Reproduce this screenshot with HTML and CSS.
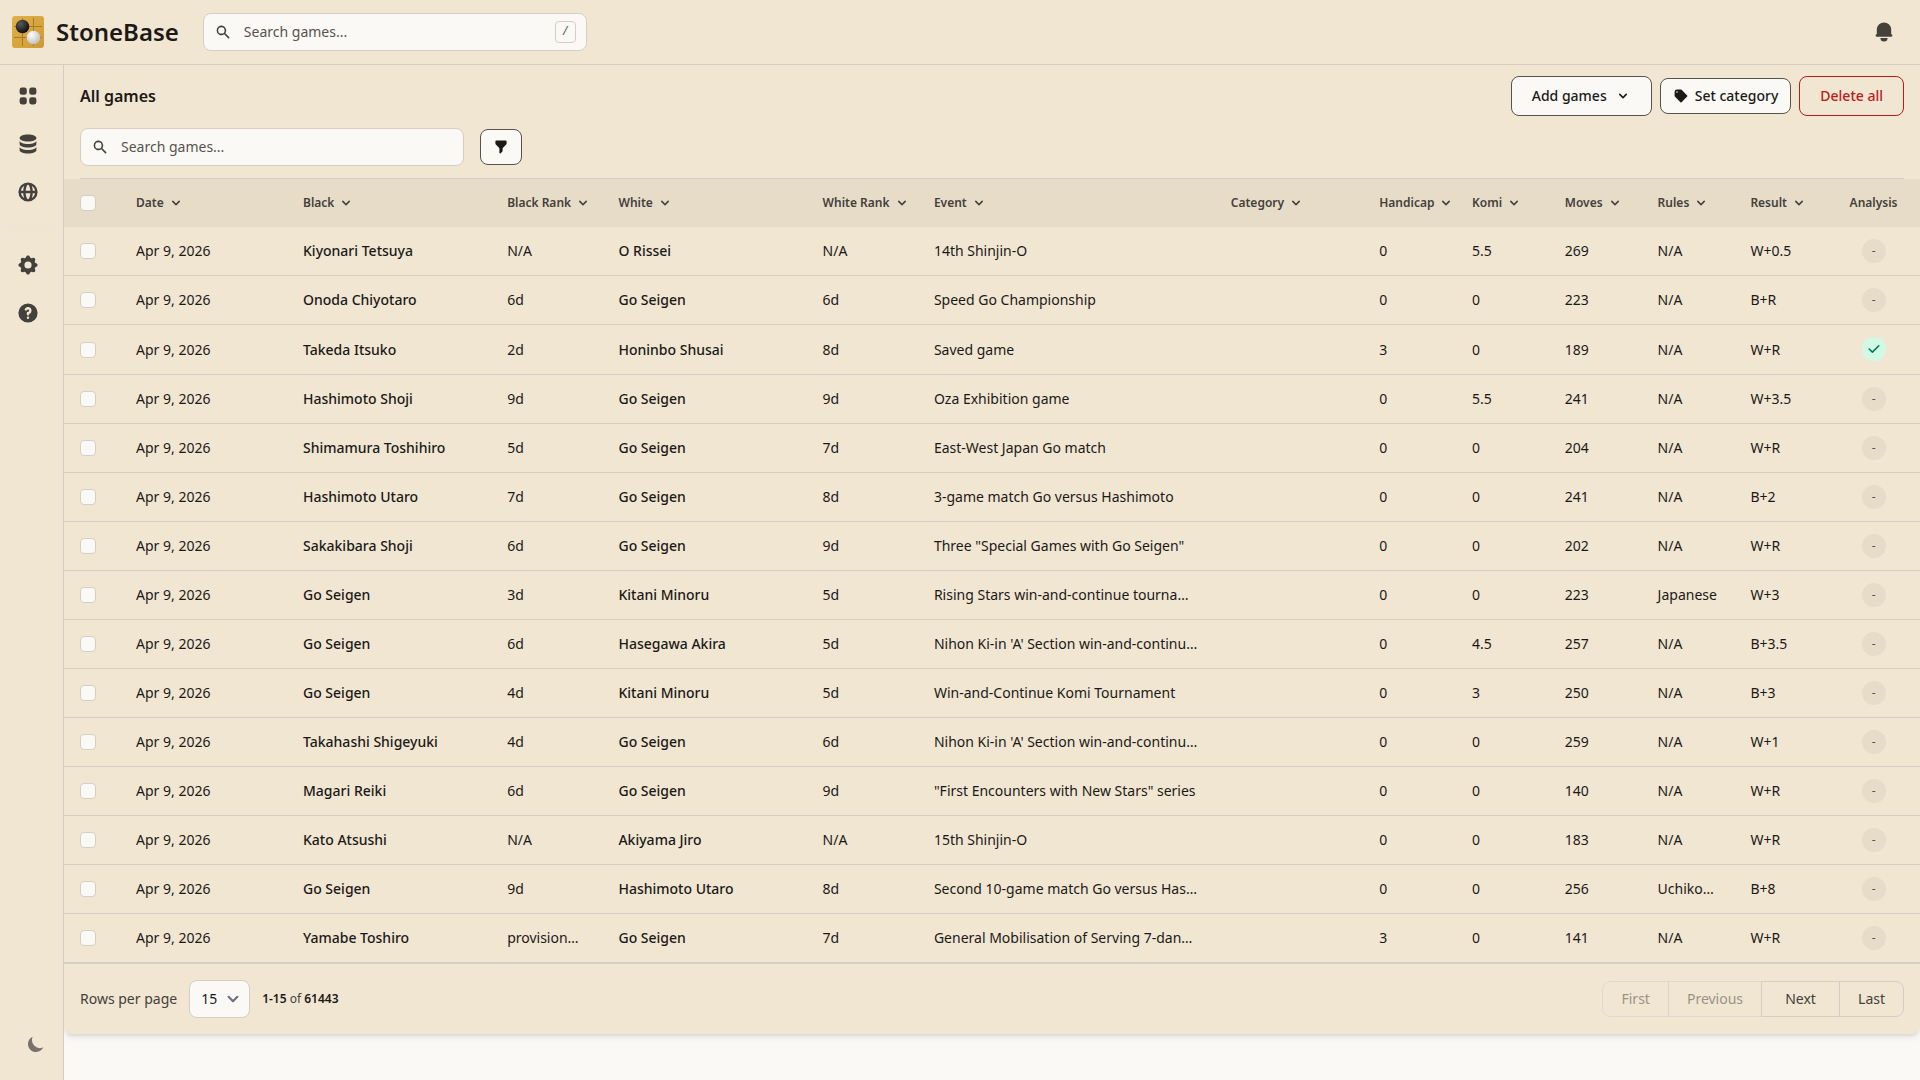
FILE: index.html
```html
<!DOCTYPE html>
<html lang="en">
<head>
    <meta charset="UTF-8">
    <meta name="viewport" content="width=device-width, initial-scale=1.0">
    <title>StoneBase</title>
    <link rel="stylesheet" href="styles.css">
</head>
<body>
<svg class="sprite" aria-hidden="true">
    <symbol id="i-search" viewBox="0 0 20 20"><path fill-rule="evenodd" d="M8 4a4 4 0 100 8 4 4 0 000-8zM2 8a6 6 0 1110.89 3.476l4.817 4.817a1 1 0 01-1.414 1.414l-4.816-4.816A6 6 0 012 8z"/></symbol>
    <symbol id="i-bell" viewBox="0 0 20 20"><path d="M10 2a6 6 0 00-6 6v3.586l-.707.707A1 1 0 004 14h12a1 1 0 00.707-1.707L16 11.586V8a6 6 0 00-6-6zM10 18a3 3 0 01-3-3h6a3 3 0 01-3 3z"/></symbol>
    <symbol id="i-grid" viewBox="0 0 20 20"><path d="M5 3a2 2 0 00-2 2v2a2 2 0 002 2h2a2 2 0 002-2V5a2 2 0 00-2-2H5zM5 11a2 2 0 00-2 2v2a2 2 0 002 2h2a2 2 0 002-2v-2a2 2 0 00-2-2H5zM11 5a2 2 0 012-2h2a2 2 0 012 2v2a2 2 0 01-2 2h-2a2 2 0 01-2-2V5zM11 13a2 2 0 012-2h2a2 2 0 012 2v2a2 2 0 01-2 2h-2a2 2 0 01-2-2v-2z"/></symbol>
    <symbol id="i-database" viewBox="0 0 20 20"><path d="M3 12v3c0 1.657 3.134 3 7 3s7-1.343 7-3v-3c0 1.657-3.134 3-7 3s-7-1.343-7-3z"/><path d="M3 7v3c0 1.657 3.134 3 7 3s7-1.343 7-3V7c0 1.657-3.134 3-7 3S3 8.657 3 7z"/><path d="M17 5c0 1.657-3.134 3-7 3S3 6.657 3 5s3.134-3 7-3 7 1.343 7 3z"/></symbol>
    <symbol id="i-globe" viewBox="0 0 20 20"><path fill-rule="evenodd" d="M4.083 9h1.946c.089-1.546.383-2.97.837-4.118A6.004 6.004 0 004.083 9zM10 2a8 8 0 100 16 8 8 0 000-16zm0 2c-.076 0-.232.032-.465.262-.238.234-.497.623-.737 1.182-.389.907-.673 2.142-.766 3.556h3.936c-.093-1.414-.377-2.649-.766-3.556-.24-.56-.5-.948-.737-1.182C10.232 4.032 10.076 4 10 4zm3.971 5c-.089-1.546-.383-2.97-.837-4.118A6.004 6.004 0 0115.917 9h-1.946zm-2.003 2H8.032c.093 1.414.377 2.649.766 3.556.24.56.5.948.737 1.182.233.23.389.262.465.262.076 0 .232-.032.465-.262.238-.234.498-.623.737-1.182.389-.907.673-2.142.766-3.556zm1.166 4.118c.454-1.147.748-2.572.837-4.118h1.946a6.004 6.004 0 01-2.783 4.118zm-6.268 0C6.412 13.97 6.118 12.546 6.03 11H4.083a6.004 6.004 0 002.783 4.118z"/></symbol>
    <symbol id="i-cog" viewBox="0 0 20 20"><path fill-rule="evenodd" d="M11.49 3.17c-.38-1.56-2.6-1.56-2.98 0a1.532 1.532 0 01-2.286.948c-1.372-.836-2.942.734-2.106 2.106.54.886.061 2.042-.947 2.287-1.561.379-1.561 2.6 0 2.978a1.532 1.532 0 01.947 2.287c-.836 1.372.734 2.942 2.106 2.106a1.532 1.532 0 012.287.947c.379 1.561 2.6 1.561 2.978 0a1.533 1.533 0 012.287-.947c1.372.836 2.942-.734 2.106-2.106a1.533 1.533 0 01.947-2.287c1.561-.379 1.561-2.6 0-2.978a1.532 1.532 0 01-.947-2.287c.836-1.372-.734-2.942-2.106-2.106a1.532 1.532 0 01-2.287-.947zM10 13a3 3 0 100-6 3 3 0 000 6z"/></symbol>
    <symbol id="i-help" viewBox="0 0 20 20"><path fill-rule="evenodd" d="M18 10a8 8 0 11-16 0 8 8 0 0116 0zm-8-3a1 1 0 00-.867.5 1 1 0 11-1.731-1A3 3 0 0113 8a3.001 3.001 0 01-2 2.83V11a1 1 0 11-2 0v-1a1 1 0 011-1 1 1 0 100-2zm0 8a1 1 0 100-2 1 1 0 000 2z"/></symbol>
    <symbol id="i-moon" viewBox="0 0 20 20"><path d="M17.293 13.293A8 8 0 016.707 2.707a8.001 8.001 0 1010.586 10.586z"/></symbol>
    <symbol id="i-tag" viewBox="0 0 20 20"><path fill-rule="evenodd" d="M17.707 9.293a1 1 0 010 1.414l-7 7a1 1 0 01-1.414 0l-7-7A.997.997 0 012 10V5a3 3 0 013-3h5c.256 0 .512.098.707.293l7 7zM5 6a1 1 0 100-2 1 1 0 000 2z"/></symbol>
    <symbol id="i-filter" viewBox="0 0 20 20"><path d="M3 3a1 1 0 011-1h12a1 1 0 011 1v3a1 1 0 01-.293.707L12 11.414V15a1 1 0 01-.293.707l-2 2A1 1 0 018 17v-5.586L3.293 6.707A1 1 0 013 6V3z"/></symbol>
    <symbol id="i-check" viewBox="0 0 20 20"><path d="M16.707 5.293a1 1 0 010 1.414l-8 8a1 1 0 01-1.414 0l-4-4a1 1 0 011.414-1.414L8 12.586l7.293-7.293a1 1 0 011.414 0z"/></symbol>
    <symbol id="i-chevron" viewBox="0 0 20 20"><path d="M5.293 7.293a1 1 0 011.414 0L10 10.586l3.293-3.293a1 1 0 111.414 1.414l-4 4a1 1 0 01-1.414 0l-4-4a1 1 0 010-1.414z"/></symbol>
</svg>

<header class="topbar">
    <a class="brand" href="#">
        <svg class="logo" viewBox="0 0 32 32" aria-hidden="true">
            <defs>
                <linearGradient id="wood" x1="0" y1="0" x2="1" y2="1">
                    <stop offset="0" stop-color="#e0b148"/>
                    <stop offset="1" stop-color="#cf9a35"/>
                </linearGradient>
                <radialGradient id="black" cx=".35" cy=".3" r=".7">
                    <stop offset="0" stop-color="#5a5a5a"/>
                    <stop offset="1" stop-color="#111"/>
                </radialGradient>
                <radialGradient id="white" cx=".35" cy=".3" r=".75">
                    <stop offset="0" stop-color="#fff"/>
                    <stop offset="1" stop-color="#bdbdbd"/>
                </radialGradient>
            </defs>
            <rect width="32" height="32" rx="3" fill="url(#wood)"/>
            <path d="M10.5 2v28M21.5 2v28M2 10.5h28M2 21.5h28" stroke="#9c7020" stroke-width=".8"/>
            <circle cx="10.5" cy="10.5" r="6.8" fill="url(#black)"/>
            <circle cx="21.5" cy="21.5" r="6.8" fill="url(#white)"/>
        </svg>
        <span>StoneBase</span>
    </a>
    <label class="search">
        <svg class="icon-sm"><use href="#i-search"/></svg>
        <input type="text" placeholder="Search games..." aria-label="Search games">
        <kbd>/</kbd>
    </label>
    <button class="bell" aria-label="Notifications"><svg class="icon"><use href="#i-bell"/></svg></button>
</header>

<div class="layout">
    <aside class="sidebar">
        <nav>
            <a href="#" aria-label="Dashboard"><svg class="icon"><use href="#i-grid"/></svg></a>
            <a href="#" aria-label="Games"><svg class="icon"><use href="#i-database"/></svg></a>
            <a href="#" aria-label="Online"><svg class="icon"><use href="#i-globe"/></svg></a>
            <hr>
            <a href="#" aria-label="Settings"><svg class="icon"><use href="#i-cog"/></svg></a>
            <a href="#" aria-label="Help"><svg class="icon"><use href="#i-help"/></svg></a>
        </nav>
        <button class="theme" aria-label="Dark mode"><svg class="icon-md"><use href="#i-moon"/></svg></button>
    </aside>

    <main>
        <section class="card">
            <div class="toolbar">
                <div class="toolbar-row">
                    <h1>All games</h1>
                    <div class="actions">
                        <button class="btn">Add games <svg class="icon-sm"><use href="#i-chevron"/></svg></button>
                        <button class="btn btn-small"><svg class="icon-sm"><use href="#i-tag"/></svg>Set category</button>
                        <button class="btn btn-danger">Delete all</button>
                    </div>
                </div>
                <div class="filters">
                    <label class="search">
                        <svg class="icon-sm"><use href="#i-search"/></svg>
                        <input type="text" placeholder="Search games..." aria-label="Search in table">
                    </label>
                    <button class="btn btn-small" aria-label="Filter"><svg class="icon-sm"><use href="#i-filter"/></svg></button>
                </div>
            </div>

            <table>
                <colgroup>
                    <col class="tick"><col class="w9"><col class="w11"><col class="w6"><col class="w11"><col class="w6"><col class="w16"><col class="w8">
                    <col class="w5"><col class="w5"><col class="w5"><col class="w5"><col class="w5"><col class="w5">
                </colgroup>
                <thead>
                    <tr id="head"></tr>
                </thead>
                <tbody id="games"></tbody>
            </table>

            <div class="footer">
                <div class="paging">
                    <label for="rows">Rows per page</label>
                    <select id="rows">
                        <option>15</option>
                        <option>25</option>
                        <option>50</option>
                    </select>
                    <p><b>1-15</b> of <b>61443</b></p>
                </div>
                <div class="pager">
                    <button disabled>First</button>
                    <button disabled>Previous</button>
                    <button class="next">Next</button>
                    <button>Last</button>
                </div>
            </div>
        </section>
    </main>
</div>

<script>
    const columns = ['Date', 'Black', 'Black Rank', 'White', 'White Rank', 'Event', 'Category', 'Handicap', 'Komi', 'Moves', 'Rules', 'Result']

    // black, rank, white, rank, event, handicap, komi, moves, rules, result, analysed
    const games = [
        ['Kiyonari Tetsuya', 'N/A', 'O Rissei', 'N/A', '14th Shinjin-O', 0, 5.5, 269, 'N/A', 'W+0.5'],
        ['Onoda Chiyotaro', '6d', 'Go Seigen', '6d', 'Speed Go Championship', 0, 0, 223, 'N/A', 'B+R'],
        ['Takeda Itsuko', '2d', 'Honinbo Shusai', '8d', 'Saved game', 3, 0, 189, 'N/A', 'W+R', true],
        ['Hashimoto Shoji', '9d', 'Go Seigen', '9d', 'Oza Exhibition game', 0, 5.5, 241, 'N/A', 'W+3.5'],
        ['Shimamura Toshihiro', '5d', 'Go Seigen', '7d', 'East-West Japan Go match', 0, 0, 204, 'N/A', 'W+R'],
        ['Hashimoto Utaro', '7d', 'Go Seigen', '8d', '3-game match Go versus Hashimoto', 0, 0, 241, 'N/A', 'B+2'],
        ['Sakakibara Shoji', '6d', 'Go Seigen', '9d', 'Three "Special Games with Go Seigen"', 0, 0, 202, 'N/A', 'W+R'],
        ['Go Seigen', '3d', 'Kitani Minoru', '5d', 'Rising Stars win-and-continue tournament', 0, 0, 223, 'Japanese', 'W+3'],
        ['Go Seigen', '6d', 'Hasegawa Akira', '5d', "Nihon Ki-in 'A' Section win-and-continue tournament", 0, 4.5, 257, 'N/A', 'B+3.5'],
        ['Go Seigen', '4d', 'Kitani Minoru', '5d', 'Win-and-Continue Komi Tournament', 0, 3, 250, 'N/A', 'B+3'],
        ['Takahashi Shigeyuki', '4d', 'Go Seigen', '6d', "Nihon Ki-in 'A' Section win-and-continue tournament", 0, 0, 259, 'N/A', 'W+1'],
        ['Magari Reiki', '6d', 'Go Seigen', '9d', '"First Encounters with New Stars" series', 0, 0, 140, 'N/A', 'W+R'],
        ['Kato Atsushi', 'N/A', 'Akiyama Jiro', 'N/A', '15th Shinjin-O', 0, 0, 183, 'N/A', 'W+R'],
        ['Go Seigen', '9d', 'Hashimoto Utaro', '8d', 'Second 10-game match Go versus Hashimoto', 0, 0, 256, 'Uchikomi', 'B+8'],
        ['Yamabe Toshiro', 'provisional 7d', 'Go Seigen', '7d', 'General Mobilisation of Serving 7-dans series', 3, 0, 141, 'N/A', 'W+R'],
    ]

    const head = document.getElementById('head')
    head.innerHTML = '<th><input type="checkbox" aria-label="Select all"></th>' +
        columns.map(c => `<th><button class="sort">${c}<svg class="icon-sm"><use href="#i-chevron"/></svg></button></th>`).join('') +
        '<th class="analysis">Analysis</th>'

    const body = document.getElementById('games')
    games.forEach(([black, blackRank, white, whiteRank, event, handicap, komi, moves, rules, result, done]) => {
        const badge = done
            ? '<span class="badge done"><svg class="icon-sm"><use href="#i-check"/></svg></span>'
            : '<span class="badge">-</span>'
        const tr = document.createElement('tr')
        tr.innerHTML = `
            <td><input type="checkbox" aria-label="Select game"></td>
            <td>Apr 9, 2026</td>
            <td class="player">${black}</td>
            <td>${blackRank}</td>
            <td class="player">${white}</td>
            <td>${whiteRank}</td>
            <td>${event}</td>
            <td></td>
            <td>${handicap}</td>
            <td>${komi}</td>
            <td>${moves}</td>
            <td>${rules}</td>
            <td>${result}</td>
            <td class="analysis">${badge}</td>`
        body.appendChild(tr)
    })
</script>
</body>
</html>
```
FILE: styles.css
```css
:root {
    --sand: #f0e6d2;
    --sand-dark: #e7dcc7;
    --paper: #faf9f5;
    --line: #d6cec3;
    --ink: #1c1917;
    --ink-soft: #44403c;
    --muted: #57534e;
    --red: #b91c1c;
}

* {
    box-sizing: border-box;
    margin: 0;
    padding: 0;
}

body {
    display: flex;
    flex-direction: column;
    min-height: 100vh;
    background: var(--paper);
    color: var(--ink);
    font: 14px/20px "Noto Sans", sans-serif;
}

button, input, select {
    font: inherit;
    color: inherit;
}

button {
    background: none;
    border: 0;
    cursor: pointer;
}

a {
    color: inherit;
    text-decoration: none;
}

svg {
    fill: currentColor;
    flex: none;
}

.sprite {
    display: none;
}

.icon {
    width: 24px;
    height: 24px;
}

.icon-md {
    width: 20px;
    height: 20px;
}

.icon-sm {
    width: 16px;
    height: 16px;
}

/* top bar */
.topbar {
    display: flex;
    align-items: center;
    gap: 24px;
    height: 65px;
    padding: 0 24px 0 12px;
    background: var(--sand);
    border-bottom: 1px solid var(--line);
}

.brand {
    display: flex;
    align-items: center;
    gap: 12px;
    font-size: 24px;
    line-height: 32px;
    font-weight: 600;
}

.logo {
    width: 32px;
    height: 32px;
}

.search {
    display: flex;
    align-items: center;
    gap: 13px;
    width: 384px;
    height: 38px;
    padding: 0 10px 0 11px;
    background: var(--paper);
    border: 1px solid var(--line);
    border-radius: 8px;
    color: var(--ink-soft);
}

.search input {
    flex: 1;
    min-width: 0;
    background: none;
    border: 0;
    outline: 0;
}

.search input::placeholder {
    color: var(--muted);
    opacity: 1;
}

kbd {
    padding: 2px 6px;
    border: 1px solid var(--line);
    border-radius: 4px;
    color: var(--muted);
    font: 12px/16px "Liberation Mono", monospace;
}

.bell {
    display: flex;
    margin-left: auto;
    color: var(--ink-soft);
}

/* sidebar */
.layout {
    display: flex;
    flex: 1;
}

.sidebar {
    position: relative;
    z-index: 1;
    display: flex;
    flex-direction: column;
    justify-content: space-between;
    width: 64px;
    padding: 11px 8px 16px;
    background: var(--sand);
    border-right: 1px solid var(--line);
    color: var(--ink-soft);
}

.sidebar nav {
    display: flex;
    flex-direction: column;
    gap: 8px;
}

.sidebar nav a {
    display: flex;
    padding: 8px;
}

.sidebar hr {
    margin: 8px 0;
    border: 0;
    border-top: 1px solid #e8e6dc;
}

.theme {
    display: flex;
    align-self: center;
    padding: 10px;
    margin-left: 8px;
    color: #78716c;
}

/* table card */
main {
    flex: 1;
    min-width: 0;
}

.card {
    background: var(--sand);
    border-radius: 0 0 8px 8px;
    box-shadow: 0 4px 6px -1px rgba(0, 0, 0, .1), 0 2px 4px -2px rgba(0, 0, 0, .1);
}

.toolbar {
    display: flex;
    flex-direction: column;
    gap: 12px;
    margin: 0 16px;
    padding: 11px 0 12px;
    border-bottom: 1px solid var(--line);
}

.toolbar-row {
    display: flex;
    align-items: center;
    justify-content: space-between;
}

h1 {
    font-size: 16px;
    line-height: 24px;
    font-weight: 600;
}

.actions {
    display: flex;
    align-items: center;
    gap: 8px;
}

.filters {
    display: flex;
    align-items: center;
    gap: 16px;
}

.btn {
    display: flex;
    align-items: center;
    gap: 8px;
    padding: 9px 20px;
    background: var(--paper);
    border: 1px solid var(--muted);
    border-radius: 8px;
    font-weight: 500;
}

.btn-small {
    gap: 6px;
    padding: 7px 12px;
}

.filters .btn-small {
    padding: 9px 12px;
}

.btn-danger {
    background: none;
    border-color: var(--red);
    color: var(--red);
}

table {
    width: 100%;
    table-layout: fixed;
    border-collapse: separate;
    border-spacing: 0;
    text-align: left;
}

.tick { width: 56px; }
.w5 { width: 5%; }
.w6 { width: 6%; }
.w8 { width: 8%; }
.w9 { width: 9%; }
.w11 { width: 11%; }
.w16 { width: 16%; }

th {
    height: 48px;
    padding: 0 16px;
    background: var(--sand-dark);
    color: var(--ink-soft);
    font-size: 12px;
    line-height: 16px;
    font-weight: 600;
    white-space: nowrap;
}

.sort {
    display: flex;
    align-items: center;
    gap: 4px;
    white-space: nowrap;
}

td {
    padding: 12px 16px;
    border-bottom: 1px solid var(--line);
    overflow: hidden;
    text-overflow: ellipsis;
    white-space: nowrap;
}

.player {
    font-weight: 500;
}

th.analysis, td.analysis {
    padding-left: 0;
    padding-right: 0;
    text-align: center;
}

input[type="checkbox"] {
    appearance: none;
    display: block;
    width: 16px;
    height: 16px;
    background: var(--paper);
    border: 1px solid var(--line);
    border-radius: 4px;
}

.badge {
    display: inline-flex;
    align-items: center;
    justify-content: center;
    width: 24px;
    height: 24px;
    background: var(--sand-dark);
    border-radius: 50%;
    color: var(--muted);
    font-size: 12px;
    line-height: 16px;
}

.badge.done {
    background: #d1fae5;
    color: #047857;
}

/* footer */
.footer {
    display: flex;
    align-items: center;
    justify-content: space-between;
    padding: 16px;
    border-top: 1px solid var(--line);
    color: var(--ink-soft);
}

.paging {
    display: flex;
    align-items: center;
    gap: 12px;
}

.paging p {
    font-size: 12px;
    line-height: 16px;
}

.paging b {
    color: var(--ink);
    font-weight: 600;
}

select {
    appearance: none;
    width: 61px;
    height: 38px;
    padding: 0 11px;
    background: var(--paper) url("data:image/svg+xml,%3Csvg xmlns='http://www.w3.org/2000/svg' fill='none' viewBox='0 0 20 20'%3E%3Cpath stroke='%236b7280' stroke-linecap='round' stroke-linejoin='round' stroke-width='2' d='M6 8l4 4 4-4'/%3E%3C/svg%3E") no-repeat right 5px center / 22px;
    border: 1px solid var(--line);
    border-radius: 8px;
    color: var(--ink);
}

.pager {
    display: flex;
}

.pager button {
    height: 36px;
    padding: 0 18px;
    border: 1px solid var(--line);
}

.pager button + button {
    margin-left: -1px;
}

.pager .next {
    min-width: 79px;
}

.pager button:first-child {
    border-radius: 8px 0 0 8px;
}

.pager button:last-child {
    border-radius: 0 8px 8px 0;
}

.pager button:disabled {
    opacity: .5;
}
```
